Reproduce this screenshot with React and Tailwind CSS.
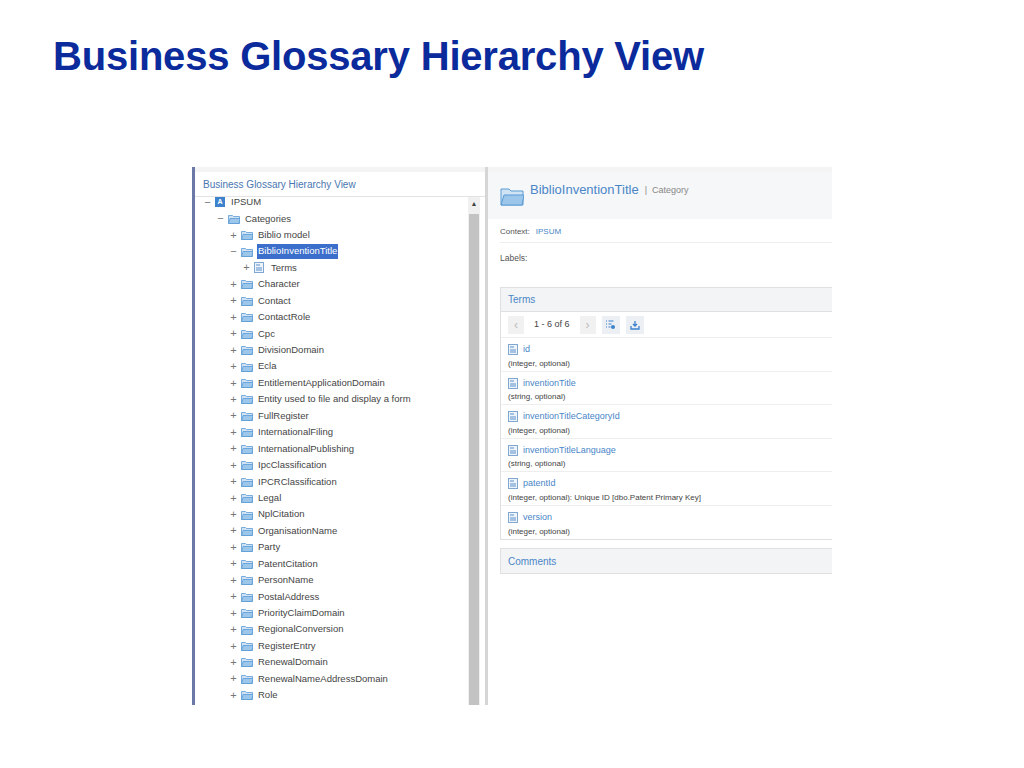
const font = { fontFamily: '"Liberation Sans", Arial, sans-serif' };

const cats = ["Character","Contact","ContactRole","Cpc","DivisionDomain","Ecla","EntitlementApplicationDomain","Entity used to file and display a form","FullRegister","InternationalFiling","InternationalPublishing","IpcClassification","IPCRClassification","Legal","NplCitation","OrganisationName","Party","PatentCitation","PersonName","PostalAddress","PriorityClaimDomain","RegionalConversion","RegisterEntry","RenewalDomain","RenewalNameAddressDomain","Role"];

const terms = [
  ["id","(integer, optional)"],
  ["inventionTitle","(string, optional)"],
  ["inventionTitleCategoryId","(integer, optional)"],
  ["inventionTitleLanguage","(string, optional)"],
  ["patentId","(integer, optional): Unique ID [dbo.Patent Primary Key]"],
  ["version","(integer, optional)"],
];

const Folder = ({ big }) => (
  <svg width={big ? 24 : 12} height={big ? 20 : 10} viewBox="0 0 12 10" className="shrink-0">
    <path d="M0.5 1.5h4l1 1h6v7h-11z" fill="#cfe3f5" stroke="#5b9bd5" strokeWidth={big ? 0.5 : 0.8} />
    <path d="M0.5 9.5l1.5-5h10l-1 5z" fill="#9cc6ea" stroke="#5b9bd5" strokeWidth={big ? 0.5 : 0.8} />
  </svg>
);

const Doc = () => (
  <svg width="10" height="11" viewBox="0 0 10 11" className="shrink-0">
    <rect x="0.5" y="0.5" width="9" height="10" fill="#eef4fb" stroke="#7fa7cf" />
    <path d="M2 3h4M2 6h6M2 8h6" stroke="#5b8fc7" />
  </svg>
);

const Pm = ({ minus }) => (
  <span className="w-[9px] text-[#777] text-[11px] leading-none text-center">{minus ? "−" : "+"}</span>
);

const Row = ({ indent, children }) => (
  <div className="flex items-center h-[16.45px] gap-[3px] text-[9.5px] text-[#444]" style={{ paddingLeft: indent }}>
    {children}
  </div>
);

export default function App() {
  return (
    <div className="w-[1024px] h-[768px] bg-white relative" style={font}>
      <h1 className="pt-[32px] pl-[53px] text-[40px] leading-[48px] font-bold text-[#0b2a9c] tracking-[-0.2px]">Business Glossary Hierarchy View</h1>
      <div className="absolute left-[192px] top-[167px] w-[640px] h-[538px] flex border-l-[3px] border-[#6b78a8] bg-[#f4f4f4] overflow-hidden">
        <div className="w-[290px] flex flex-col mt-[5px] bg-white">
          <div className="h-[25px] flex items-center pl-[8px] text-[10px] text-[#4a76b0] border-b border-[#e3e3e3]">Business Glossary Hierarchy View</div>
          <div className="flex flex-1 min-h-0">
            <div className="flex-1 -mt-[3px] overflow-hidden">
              <Row indent={8}><Pm minus /><span className="w-[10px] h-[10px] bg-[#3d82cc] text-white text-[7px] font-bold flex items-center justify-center">A</span><span className="ml-[3px]">IPSUM</span></Row>
              <Row indent={21}><Pm minus /><Folder /><span className="ml-[2px]">Categories</span></Row>
              <Row indent={34}><Pm /><Folder /><span className="ml-[2px]">Biblio model</span></Row>
              <Row indent={34}><Pm minus /><Folder /><span className="ml-[1px] bg-[#3c6fcc] text-white px-[1px]">BiblioInventionTitle</span></Row>
              <Row indent={47}><Pm /><Doc /><span className="ml-[4px]">Terms</span></Row>
              {cats.map(c => (
                <Row key={c} indent={34}><Pm /><Folder /><span className="ml-[2px]">{c}</span></Row>
              ))}
            </div>
            <div className="w-[12px] bg-[#f0f0f0] flex flex-col items-center mr-[5px]">
              <span className="text-[7px] text-[#444] mt-[2px]">▲</span>
              <div className="w-[10px] flex-1 bg-[#c3c3c3] mt-[4px]" />
            </div>
          </div>
        </div>
        <div className="w-[3px] bg-[#d6d6d6]" />
        <div className="flex-1 flex flex-col mt-[5px] bg-white">
          <div className="h-[47px] bg-[#f6f7f8] flex items-center pl-[12px] gap-[6px]">
            <Folder big />
            <span className="text-[13px] text-[#4a86c8] -mt-[12px]">BiblioInventionTitle</span>
            <span className="text-[9px] text-[#888] -mt-[10px]">|&nbsp;&nbsp;Category</span>
          </div>
          <div className="ml-[12px] h-[24px] flex items-center border-b border-[#eee] text-[8px] text-[#555] gap-[6px] pt-[3px]">Context: <span className="text-[#4a86c8]">IPSUM</span></div>
          <div className="ml-[12px] h-[30px] flex items-center text-[8.5px] text-[#555]">Labels:</div>
          <div className="ml-[12px] -mr-[2px] mt-[14px] border border-[#e0e0e0]">
            <div className="h-[24px] bg-[#f3f4f5] flex items-center pl-[7px] text-[10px] text-[#4a86c8] border-b border-[#e0e0e0]">Terms</div>
            <div className="h-[26px] flex items-center pl-[7px] gap-[6px] text-[9px] text-[#444] border-b border-[#eee]">
              <span className="w-[16px] h-[18px] bg-[#f1f1f1] text-[#bbb] flex items-center justify-center text-[12px]">‹</span>
              <span className="px-[4px]">1 - 6 of 6</span>
              <span className="w-[16px] h-[18px] bg-[#f1f1f1] text-[#bbb] flex items-center justify-center text-[12px]">›</span>
              <span className="w-[18px] h-[18px] bg-[#eceff3] flex items-center justify-center">
                <svg width="11" height="10" viewBox="0 0 11 10"><path d="M1 1h1M1 4h1M1 7h1M3.5 1h5M3.5 4h3M3.5 7h2" stroke="#3d82cc" /><circle cx="8" cy="7" r="2" fill="#3d82cc" /></svg>
              </span>
              <span className="w-[18px] h-[18px] bg-[#eceff3] flex items-center justify-center">
                <svg width="10" height="10" viewBox="0 0 10 10"><path d="M5 1v5M3 4l2 2 2-2M1 6v3h8V6" stroke="#3d82cc" fill="none" strokeWidth="1.3" /></svg>
              </span>
            </div>
            {terms.map(([n, d], i) => (
              <div key={n} className={`h-[33.5px] pl-[7px] pt-[4px] flex flex-col justify-center ${i < 5 ? "border-b border-[#eee]" : ""}`}>
                <div className="flex items-center gap-[5px] text-[9px] text-[#4a86c8]"><Doc />{n}</div>
                <div className="text-[8px] text-[#444] mt-[1px]">{d}</div>
              </div>
            ))}
          </div>
          <div className="ml-[12px] -mr-[2px] mt-[8px] h-[26px] bg-[#f3f4f5] border border-[#e0e0e0] flex items-center pl-[7px] text-[10px] text-[#4a86c8]">Comments</div>
        </div>
      </div>
    </div>
  );
}
